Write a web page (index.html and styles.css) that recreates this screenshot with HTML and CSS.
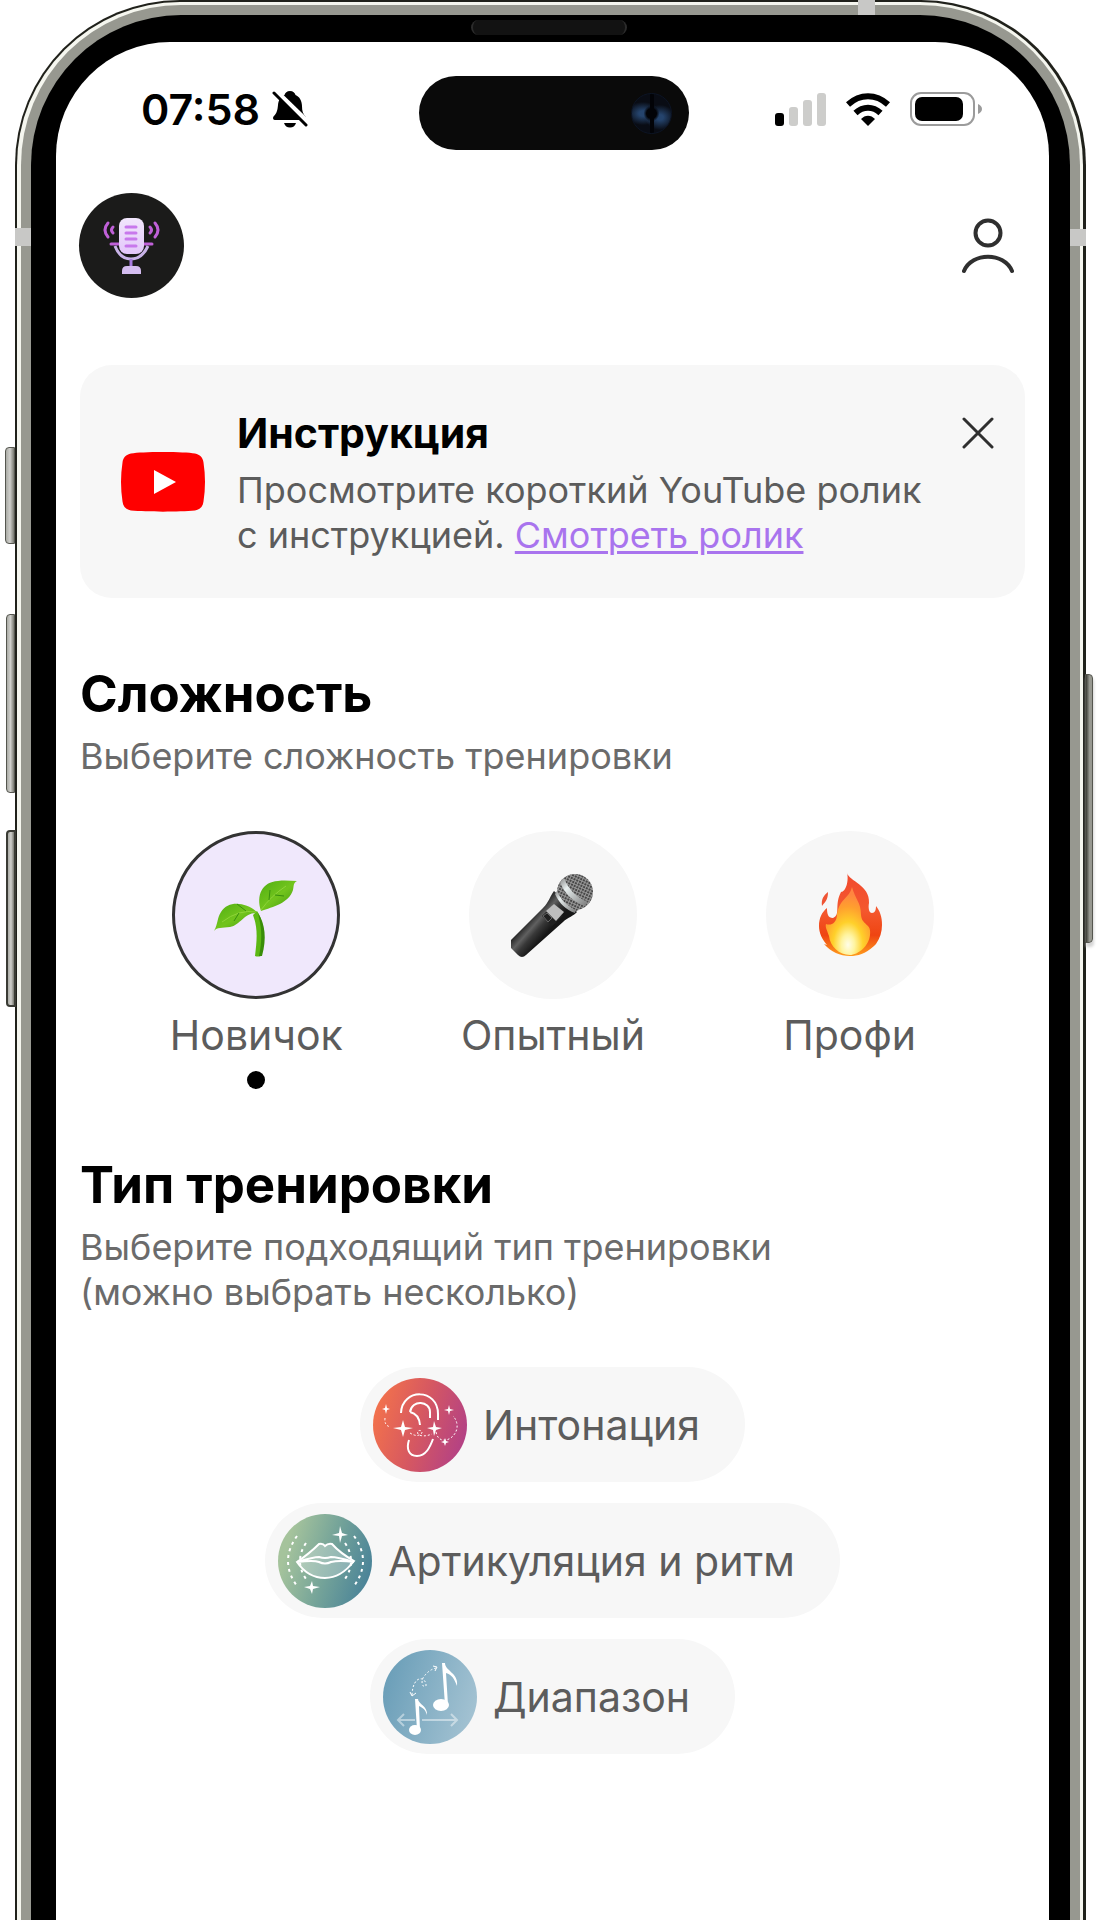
FILE: index.html
```html
<!DOCTYPE html>
<html lang="ru">
<head>
<meta charset="utf-8">
<meta name="viewport" content="width=device-width, initial-scale=1">
<title>Тренировка голоса</title>
<link rel="stylesheet" href="styles.css">
</head>
<body>
<div class="phone">
  <span class="side-key side-key-action"></span>
  <span class="side-key side-key-up"></span>
  <span class="side-key side-key-down"></span>
  <span class="side-key side-key-power"></span>
  <div class="edge"><div class="metal"><div class="bezel">
    <span class="speaker"></span>
    <div class="screen">
      <div class="status">
        <div class="clock">
          <time>07:58</time>
          <svg class="bell" viewBox="0 0 36 38" aria-hidden="true">
            <path d="M18 1c3 0 5 2 5.500 4 4 1.500 6.500 6 6.500 11 0 5 1 8 3.500 10.500 1 1.500.5 3.500-1.500 3.500H3C1 30 .5 28 1.500 26.500 5 23 5.500 20 6 15c.4-5 3-8.500 6.500-10C13 3 15 1 18 1z"/>
            <path d="M12 33h12c-1 3-3 4.500-6 4.500S13 36 12 33z"/>
            <path d="M2 0l34 33" stroke="#fff" stroke-width="6"/>
            <path d="M2 3l32 32" stroke="#000" stroke-width="3" stroke-linecap="round"/>
          </svg>
        </div>
        <div class="island"><span class="lens"></span></div>
        <div class="signals">
          <svg class="bars" viewBox="0 0 51 33" aria-hidden="true">
            <rect y="20" width="9" height="13" rx="3"/>
            <g fill="#cdcdcb"><rect x="14" y="14" width="9" height="19" rx="3"/><rect x="28" y="7" width="9" height="26" rx="3"/><rect x="42" width="9" height="33" rx="3"/></g>
          </svg>
          <svg class="wifi" viewBox="0 0 44 33" aria-hidden="true">
            <path d="M22 33l-7-7c4-4.500 10-4.500 14 0z"/>
            <path d="M9.500 20c7.500-7 17.500-7 25 0M2 11.500c12-11 28-11 40 0" fill="none" stroke="#000" stroke-width="6"/>
          </svg>
          <svg class="battery" viewBox="0 0 72 34" aria-hidden="true">
            <rect x="1" y="1" width="63" height="32" rx="10" fill="none" stroke="#9b9b9b" stroke-width="2"/>
            <rect x="5" y="5" width="48" height="24" rx="7"/>
            <path d="M68 12q4 2 4 5t-4 5z" fill="#9b9b9b"/>
          </svg>
        </div>
      </div>

      <header class="topbar">
        <a class="logo" href="#" aria-label="Главная">
          <svg viewBox="0 0 105 105" aria-hidden="true">
            <defs><linearGradient id="mic" x1="0" y1="0" x2="0" y2="1"><stop offset="0" stop-color="#f1e6fc"/><stop offset="1" stop-color="#e3c6fa"/></linearGradient></defs>
            <g fill="none" stroke="#c060d8" stroke-width="3" stroke-linecap="round">
              <path d="M29 30q-6 7 0 14M76 30q6 7 0 14M34 34q-3 3 0 6M71 34q3 3 0 6"/>
              <path d="M32 51h8M65 51h8"/>
            </g>
            <path d="M36 53q5 13 16 13t17-13" fill="none" stroke="#c9b3e8" stroke-width="3"/>
            <path d="M52 66v8" stroke="#a77be0" stroke-width="3"/>
            <rect x="40" y="25" width="25" height="36" rx="8" fill="url(#mic)"/>
            <path d="M47 34h10M47 40h10M47 46h10M47 53h10" stroke="#c878ec" stroke-width="3" stroke-linecap="round"/>
            <path d="M43 81v-3q0-5 5-5h9q5 0 5 5v3z" fill="#d4bdf0"/>
          </svg>
        </a>
        <button class="icon-button profile" type="button" aria-label="Профиль">
          <svg viewBox="0 0 52 56" aria-hidden="true"><circle cx="26" cy="15" r="12.500"/><path d="M2 53c8-19 40-19 48 0"/></svg>
        </button>
      </header>

      <main class="content">
        <section class="card">
          <svg class="youtube" viewBox="0 0 84 60" aria-hidden="true">
            <path fill="#f00" d="M42 0C57 0 68 .5 74 1.500c5 1 8 4 8.500 9 2 13 2 26 0 39-.5 5-3.500 8-8.500 9-16 1.500-48 1.500-64 0-5-1-8-4-8.500-9-2-13-2-26 0-39C2 5.500 5 2.500 10 1.500 16 .5 27 0 42 0z"/>
            <path fill="#fff" d="M33 18l22 12-22 12z"/>
          </svg>
          <div class="card-text">
            <h2>Инструкция</h2>
            <p>Просмотрите короткий YouTube ролик <br>с инструкцией. <a href="#">Смотреть ролик</a></p>
          </div>
          <button class="icon-button close" type="button" aria-label="Закрыть">
            <svg viewBox="0 0 32 32" aria-hidden="true"><path d="M2 2l28 28M30 2L2 30"/></svg>
          </button>
        </section>

        <section class="block">
          <h1>Сложность</h1>
          <p class="hint">Выберите сложность тренировки</p>
          <div class="levels">
            <label class="level">
              <input type="radio" name="level" checked>
              <span class="disc">
                <svg viewBox="0 -7 84 84" aria-hidden="true">
                  <defs><linearGradient id="leaf" x1="0" y1="0" x2="1" y2="1"><stop offset="0" stop-color="#4fae12"/><stop offset=".5" stop-color="#72c41d"/><stop offset="1" stop-color="#3c960c"/></linearGradient></defs>
                  <path d="M43 31c7 11 9 25 4 45q-3 1-6 0c2-16 3-28-2-41z" fill="#5cb813"/>
                  <path d="M45 38c3 12 3 24 0 38h3c5-18 3-32-4-43z" fill="#398d08"/>
                  <path d="M47 31C42 15 48 2 64 1c7-1 13 0 19 0-4 2-3 5-4 9-4 13-20 17-32 21z" fill="url(#leaf)"/>
                  <path d="M44 33C34 23 15 19 7 32 3 38 4 44 0 51c3-4 8-3 16-4 11-2 14-15 28-14z" fill="url(#leaf)"/>
                  <path d="M47 30Q57 16 72 6M42 32Q25 29 8 42" fill="none" stroke="#8fd43a"/>
                  <path d="M55 20l1-10M61 15l9 1M32 31l-9-7M25 33l-5 8" fill="none" stroke="#388f0d"/>
                </svg>
              </span>
              <span class="level-name">Новичок</span>
            </label>
            <label class="level">
              <input type="radio" name="level">
              <span class="disc">
                <svg viewBox="2 0 84 84" aria-hidden="true">
                  <defs>
                    <linearGradient id="body" gradientUnits="userSpaceOnUse" x1="20" y1="46" x2="37" y2="61"><stop offset="0" stop-color="#222"/><stop offset=".35" stop-color="#606060"/><stop offset=".6" stop-color="#383838"/><stop offset="1" stop-color="#161616"/></linearGradient>
                    <pattern id="mesh" width="3" height="3" patternUnits="userSpaceOnUse" patternTransform="rotate(25)"><path d="M0 0h3v3H0z" fill="#969696"/><path d="M1 1h2v2H1z" fill="#464646"/></pattern>
                    <linearGradient id="band" x1="0" y1="0" x2="1" y2="1"><stop offset="0" stop-color="#888"/><stop offset=".3" stop-color="#e8efef"/><stop offset="1" stop-color="#777"/></linearGradient>
                  </defs>
                  <path d="M45 18l23 21c-3 4-9 5-14 10L17 82q-4 4-8 0l-8-8q-2-3 0-6l33-33c6-6 7-12 11-17z" fill="url(#body)"/>
                  <circle cx="66" cy="19" r="18" fill="url(#mesh)"/>
                  <path d="M48 18c3 9 10 17 19 20l3-1C62 32 54 22 51 12z" fill="url(#mesh)"/>
                  <path d="M51 9c4 11 13 20 25 24l3-4C68 25 59 16 55 5z" fill="url(#band)"/>
                  <path d="M46 21c4 9 11 16 20 19l1-3C58 33 52 27 48 18z" fill="url(#band)"/>
                  <path d="M33 43l9-9 12 9-11 10z" fill="#202020"/>
                  <path d="M37 38l8-7 10 8-8 9z" fill="#bdbdbd"/>
                  <path d="M34 43l4-3 5 5-4 4z" fill="none" stroke="#666"/>
                </svg>
              </span>
              <span class="level-name">Опытный</span>
            </label>
            <label class="level">
              <input type="radio" name="level">
              <span class="disc">
                <svg viewBox="1 1 84 84" aria-hidden="true">
                  <defs>
                    <linearGradient id="flame" x1="0" y1="0" x2="0" y2="1"><stop offset="0" stop-color="#f1492e"/><stop offset=".45" stop-color="#f4582e"/><stop offset=".75" stop-color="#ef4512"/><stop offset="1" stop-color="#ff9c1c"/></linearGradient>
                    <radialGradient id="core" cx=".5" cy=".85" r=".75"><stop offset="0" stop-color="#fffde8"/><stop offset=".2" stop-color="#fff4a0"/><stop offset=".45" stop-color="#ffd02a"/><stop offset=".75" stop-color="#ff9f2e"/><stop offset="1" stop-color="#ff8540"/></radialGradient>
                  </defs>
                  <path d="M40 1c2 8 23 12 22 30-1 5 0 10 3 10 3 0 4-3 4-7 4 5 6 11 6 19 0 7-2 13-6 19l-2 2c-9 8-16 10-24 10-10 0-19-4-26-12l3 1c-5-6-8-12-8-19 0-8 3-14 8-18 0 6 1 10 6 10 8-3 1-13 8-26 5 0 8-12 6-19z" fill="url(#flame)"/>
                  <path d="M45 15c3 12 9 15 9 28 1 11 11 8 9 20-1 11-12 20-20 20-11 0-20-9-21-19-2-6-4-9-3-12 5 2 11-1 11-10 3-16 12-15 15-27z" fill="url(#core)"/>
                  <path d="M21 20c0 8-3 10-6 14-1-7 2-11 6-14z" fill="#ef5434"/>
                </svg>
              </span>
              <span class="level-name">Профи</span>
            </label>
          </div>
        </section>

        <section class="block">
          <h1>Тип тренировки</h1>
          <p class="hint">Выберите подходящий тип тренировки <br>(можно выбрать несколько)</p>
          <div class="types">
            <label class="type">
              <input type="checkbox" name="type">
              <svg viewBox="0 0 94 94" aria-hidden="true">
                <defs><linearGradient id="warm" x1="0" y1=".3" x2="1" y2=".6"><stop offset="0" stop-color="#f4734b"/><stop offset=".5" stop-color="#d65861"/><stop offset="1" stop-color="#b34185"/></linearGradient></defs>
                <circle cx="47" cy="47" r="47" fill="url(#warm)"/>
                <g fill="none" stroke="#fff" stroke-width="2">
                  <path d="M28 35C29 10 65 10 65 36v6M37 34c2-13 20-11 20 0v6M37 34q9 2 10 13M36 62c-3 9 0 16 8 16 9 0 13-9 16-17"/>
                  <path d="M12 40q-1 8 6 9M37 55q8 5 12 0c0-4-6-3-4 1 3 3 9 2 14 0M63 54c3 16 23 6 21-8q-1-5-4-8" stroke-dasharray="2 2" stroke-width="1"/>
                </g>
                <path fill="#fff" d="M30 42l2 7 8 1-8 2-2 7-2-7-8-2 8-1zM61 43l2 6 6 1-6 2-2 6-1-6-6-2 6-1zM13 26l1 4 3 1-3 1-1 4-1-4-3-1 3-1zM76 27l1 4 4 1-4 1-1 4-1-4-4-1 4-1zM72 60l1 3 3 1-3 1-1 3-1-3-3-1 3-1z"/>
              </svg>
              <span>Интонация</span>
            </label>
            <label class="type">
              <input type="checkbox" name="type">
              <svg viewBox="0 0 94 94" aria-hidden="true">
                <defs><linearGradient id="sea" x1="0" y1=".3" x2="1" y2=".6"><stop offset=".1" stop-color="#a5c39c"/><stop offset=".55" stop-color="#74a399"/><stop offset="1" stop-color="#4a8398"/></linearGradient></defs>
                <circle cx="47" cy="47" r="47" fill="url(#sea)"/>
                <g fill="none" stroke="#fff" stroke-width="2">
                  <path d="M19 48q13-9 22-18 4-1 6 2 3-3 7-2 8 9 22 17-13 17-29 17-17 0-28-16z" fill="#fff" fill-opacity=".28"/>
                  <path d="M19 48q17-5 22-5 6 2 12 0 6 0 23 5M19 48q17-2 22 0 6 3 12 0 8-2 23 0"/>
                  <path d="M19 22q-18 25 0 50M76 22q18 25 0 50M28 29q-12 18 0 36M67 29q12 18 0 36" stroke-dasharray="3 4"/>
                </g>
                <path fill="#fff" d="M62 12l2 7 6 2-6 1-2 7-1-7-7-1 7-2zM34 67l1 5 7 1-7 2-1 5-2-5-6-2 6-1z"/>
              </svg>
              <span>Артикуляция и ритм</span>
            </label>
            <label class="type">
              <input type="checkbox" name="type">
              <svg viewBox="0 0 94 94" aria-hidden="true">
                <defs><linearGradient id="sky" x1="0" y1=".3" x2="1" y2=".6"><stop offset="0" stop-color="#6a9eb8"/><stop offset="1" stop-color="#a3c2d2"/></linearGradient></defs>
                <circle cx="47" cy="47" r="47" fill="url(#sky)"/>
                <g fill="#fff">
                  <ellipse cx="58" cy="55" rx="8" ry="6"/><path d="M59 13h3c0 8 14 10 12 23-3-8-5-11-11-13l2 32h-3z"/>
                  <ellipse cx="32" cy="80" rx="6" ry="5"/><path d="M32 49h3c0 5 10 7 9 16-2-6-4-7-8-9l1 24h-3z"/>
                </g>
                <g fill="none" stroke="#fff" stroke-width="1">
                  <path d="M29 45c1-22 15-18 14-9-4 2-5-4-3-8q5-8 13-10" stroke-dasharray="2 2"/>
                  <path d="M27 42l2 4 4-3M50 16l4 1-2 4"/>
                  <path d="M15 70h17M39 70h35M21 64l-6 6 6 6M68 64l6 6-6 6" stroke-width="2" opacity=".45"/>
                </g>
              </svg>
              <span>Диапазон</span>
            </label>
          </div>
        </section>
      </main>
    </div>
  </div></div></div>
  <span class="antenna antenna-top"></span>
  <span class="antenna antenna-left"></span>
  <span class="antenna antenna-right"></span>
</div>
</body>
</html>
```
FILE: styles.css
```css
* { box-sizing: border-box; }
body { margin: 0; background: #fff; color: #000; font-family: Inter, "Liberation Sans", sans-serif; }
h1, h2, p { margin: 0; }
svg { display: block; flex: none; }

/* Device shell: nested layers, open at the bottom */
.phone { position: relative; display: flex; min-height: 100vh; margin: 0 13px 0 15px; padding: 2px 3px 0 2px; background: #20211b; border-radius: 165px 165px 0 0; }
.edge, .metal, .bezel { flex: 1; min-width: 0; display: flex; }
.edge { padding: 3px 3px 0 4px; background: #f5f6ef; border-radius: 163px 163px 0 0; }
.metal { padding: 10px 10px 0; background: #979890; border-radius: 160px 160px 0 0; }
.bezel { position: relative; padding: 27px 21px 0 25px; background: #000; border-radius: 150px 150px 0 0; }
.screen { flex: 1; min-width: 0; background: #fff; border-radius: 114px 114px 0 0; }

.speaker { position: absolute; top: 5px; left: 50%; width: 156px; height: 15px; margin-left: -80px; background: #121212; border: solid #2b2b2b; border-width: 0 2px; border-radius: 8px; }
.antenna { position: absolute; background: #c8c8c6; }
.antenna-top { top: 0; right: 211px; width: 17px; height: 15px; }
.antenna-left { top: 228px; left: 0; width: 16px; height: 18px; }
.antenna-right { top: 229px; right: 0; width: 16px; height: 17px; }
.side-key { position: absolute; border: 1px solid #55564f; border-radius: 4px 0 0 4px; background: linear-gradient(90deg, #aaaba5, #cfcfcb 50%, #77786f); }
.side-key-action { top: 447px; left: -10px; width: 10px; height: 97px; }
.side-key-up { top: 614px; left: -9px; width: 9px; height: 179px; }
.side-key-down { top: 830px; left: -9px; width: 10px; height: 177px; border: 2px solid #3a3b34; }
.side-key-power { top: 674px; right: -7px; width: 8px; height: 269px; border-radius: 0 4px 4px 0; background: linear-gradient(90deg, #3a3b34, #979890 60%); box-shadow: 1px 4px 3px #d5d5d5; }

/* Status bar */
.status { display: grid; grid-template-columns: 1fr 270px 1fr; align-items: center; padding: 34px 67px 0 70px; }
.clock { display: flex; align-items: center; gap: 12px; padding: 0 0 8px 15px; font-size: 43px; font-weight: 600; line-height: 64px; }
.bell { width: 36px; height: 38px; }
.island { display: flex; justify-content: flex-end; align-items: center; height: 74px; padding-right: 17px; background: #0a0a0a; border-radius: 37px; }
.lens { width: 41px; height: 41px; border: 1px solid #0c1424; border-radius: 50%; background: linear-gradient(90deg, transparent 46%, #020307 46% 56%, transparent 56%), radial-gradient(circle at 50% 50%, #020307 5px, transparent 8px), radial-gradient(ellipse at 28% 50%, #25446d 10%, transparent 42%), radial-gradient(ellipse at 72% 60%, #25446d 8%, transparent 38%), #090c14; }
.signals { display: flex; justify-content: flex-end; align-items: center; gap: 20px; padding-bottom: 8px; }
.bars { width: 51px; height: 33px; }
.wifi { width: 44px; height: 33px; }
.battery { width: 72px; height: 34px; }

.topbar { display: flex; align-items: center; justify-content: space-between; padding: 43px 35px 0 23px; }
.logo { width: 105px; height: 105px; border-radius: 50%; background: #1b1b1a; }
.icon-button { padding: 0; border: 0; background: none; cursor: pointer; }
.icon-button svg { fill: none; stroke: #2f2f2f; stroke-linecap: round; }
.profile svg { width: 52px; height: 56px; stroke-width: 4; }

/* Content */
.content { padding: 67px 24px 96px 24px; }
.card { display: flex; align-items: flex-start; gap: 32px; padding: 44px 31px 40px 41px; background: #f7f7f7; border-radius: 32px; }
.youtube { width: 84px; height: 60px; margin-top: 43px; }
.card-text { flex: 1; min-width: 0; white-space: nowrap; }
.card h2 { font-size: 41px; font-weight: 700; line-height: 48px; }
.card p, .hint { color: #5c5c5c; font-size: 36px; line-height: 45px; }
.card p { margin-top: 11px; }
.card a { color: #a974ee; text-decoration-thickness: 3px; text-underline-offset: 3px; }
.close { margin-top: 8px; }
.close svg { width: 32px; height: 32px; stroke-width: 3; }

.block { margin-top: 64px; }
.block h1 { font-size: 51px; font-weight: 700; line-height: 64px; }
.block .hint { margin-top: 8px; color: #6b6b6b; }
.level input, .type input { position: absolute; opacity: 0; }
.levels { display: grid; grid-template-columns: repeat(3, 1fr); margin: 52px 27px 0 28px; }
.level { position: relative; display: flex; flex-direction: column; align-items: center; cursor: pointer; }
.disc { display: grid; place-items: center; width: 168px; height: 168px; border-radius: 50%; background: #f7f7f7; }
.disc svg { width: 84px; height: 84px; }
.level-name { margin-top: 10px; color: #5c5c5c; font-size: 41px; line-height: 52px; }
.level::after { content: ""; width: 18px; height: 18px; margin-top: 10px; border-radius: 50%; }
.level:has(:checked)::after { background: #000; }
:checked + .disc { background: #f0e8fc; border: 3px solid #333; }

.types { display: flex; flex-direction: column; align-items: center; gap: 21px; margin-top: 52px; }
.type { position: relative; display: flex; align-items: center; gap: 16px; height: 115px; padding: 0 45px 0 13px; border-radius: 58px; background: #f7f7f7; color: #5c5c5c; font-size: 41px; line-height: 52px; cursor: pointer; }
.type svg { width: 94px; height: 94px; }
```
